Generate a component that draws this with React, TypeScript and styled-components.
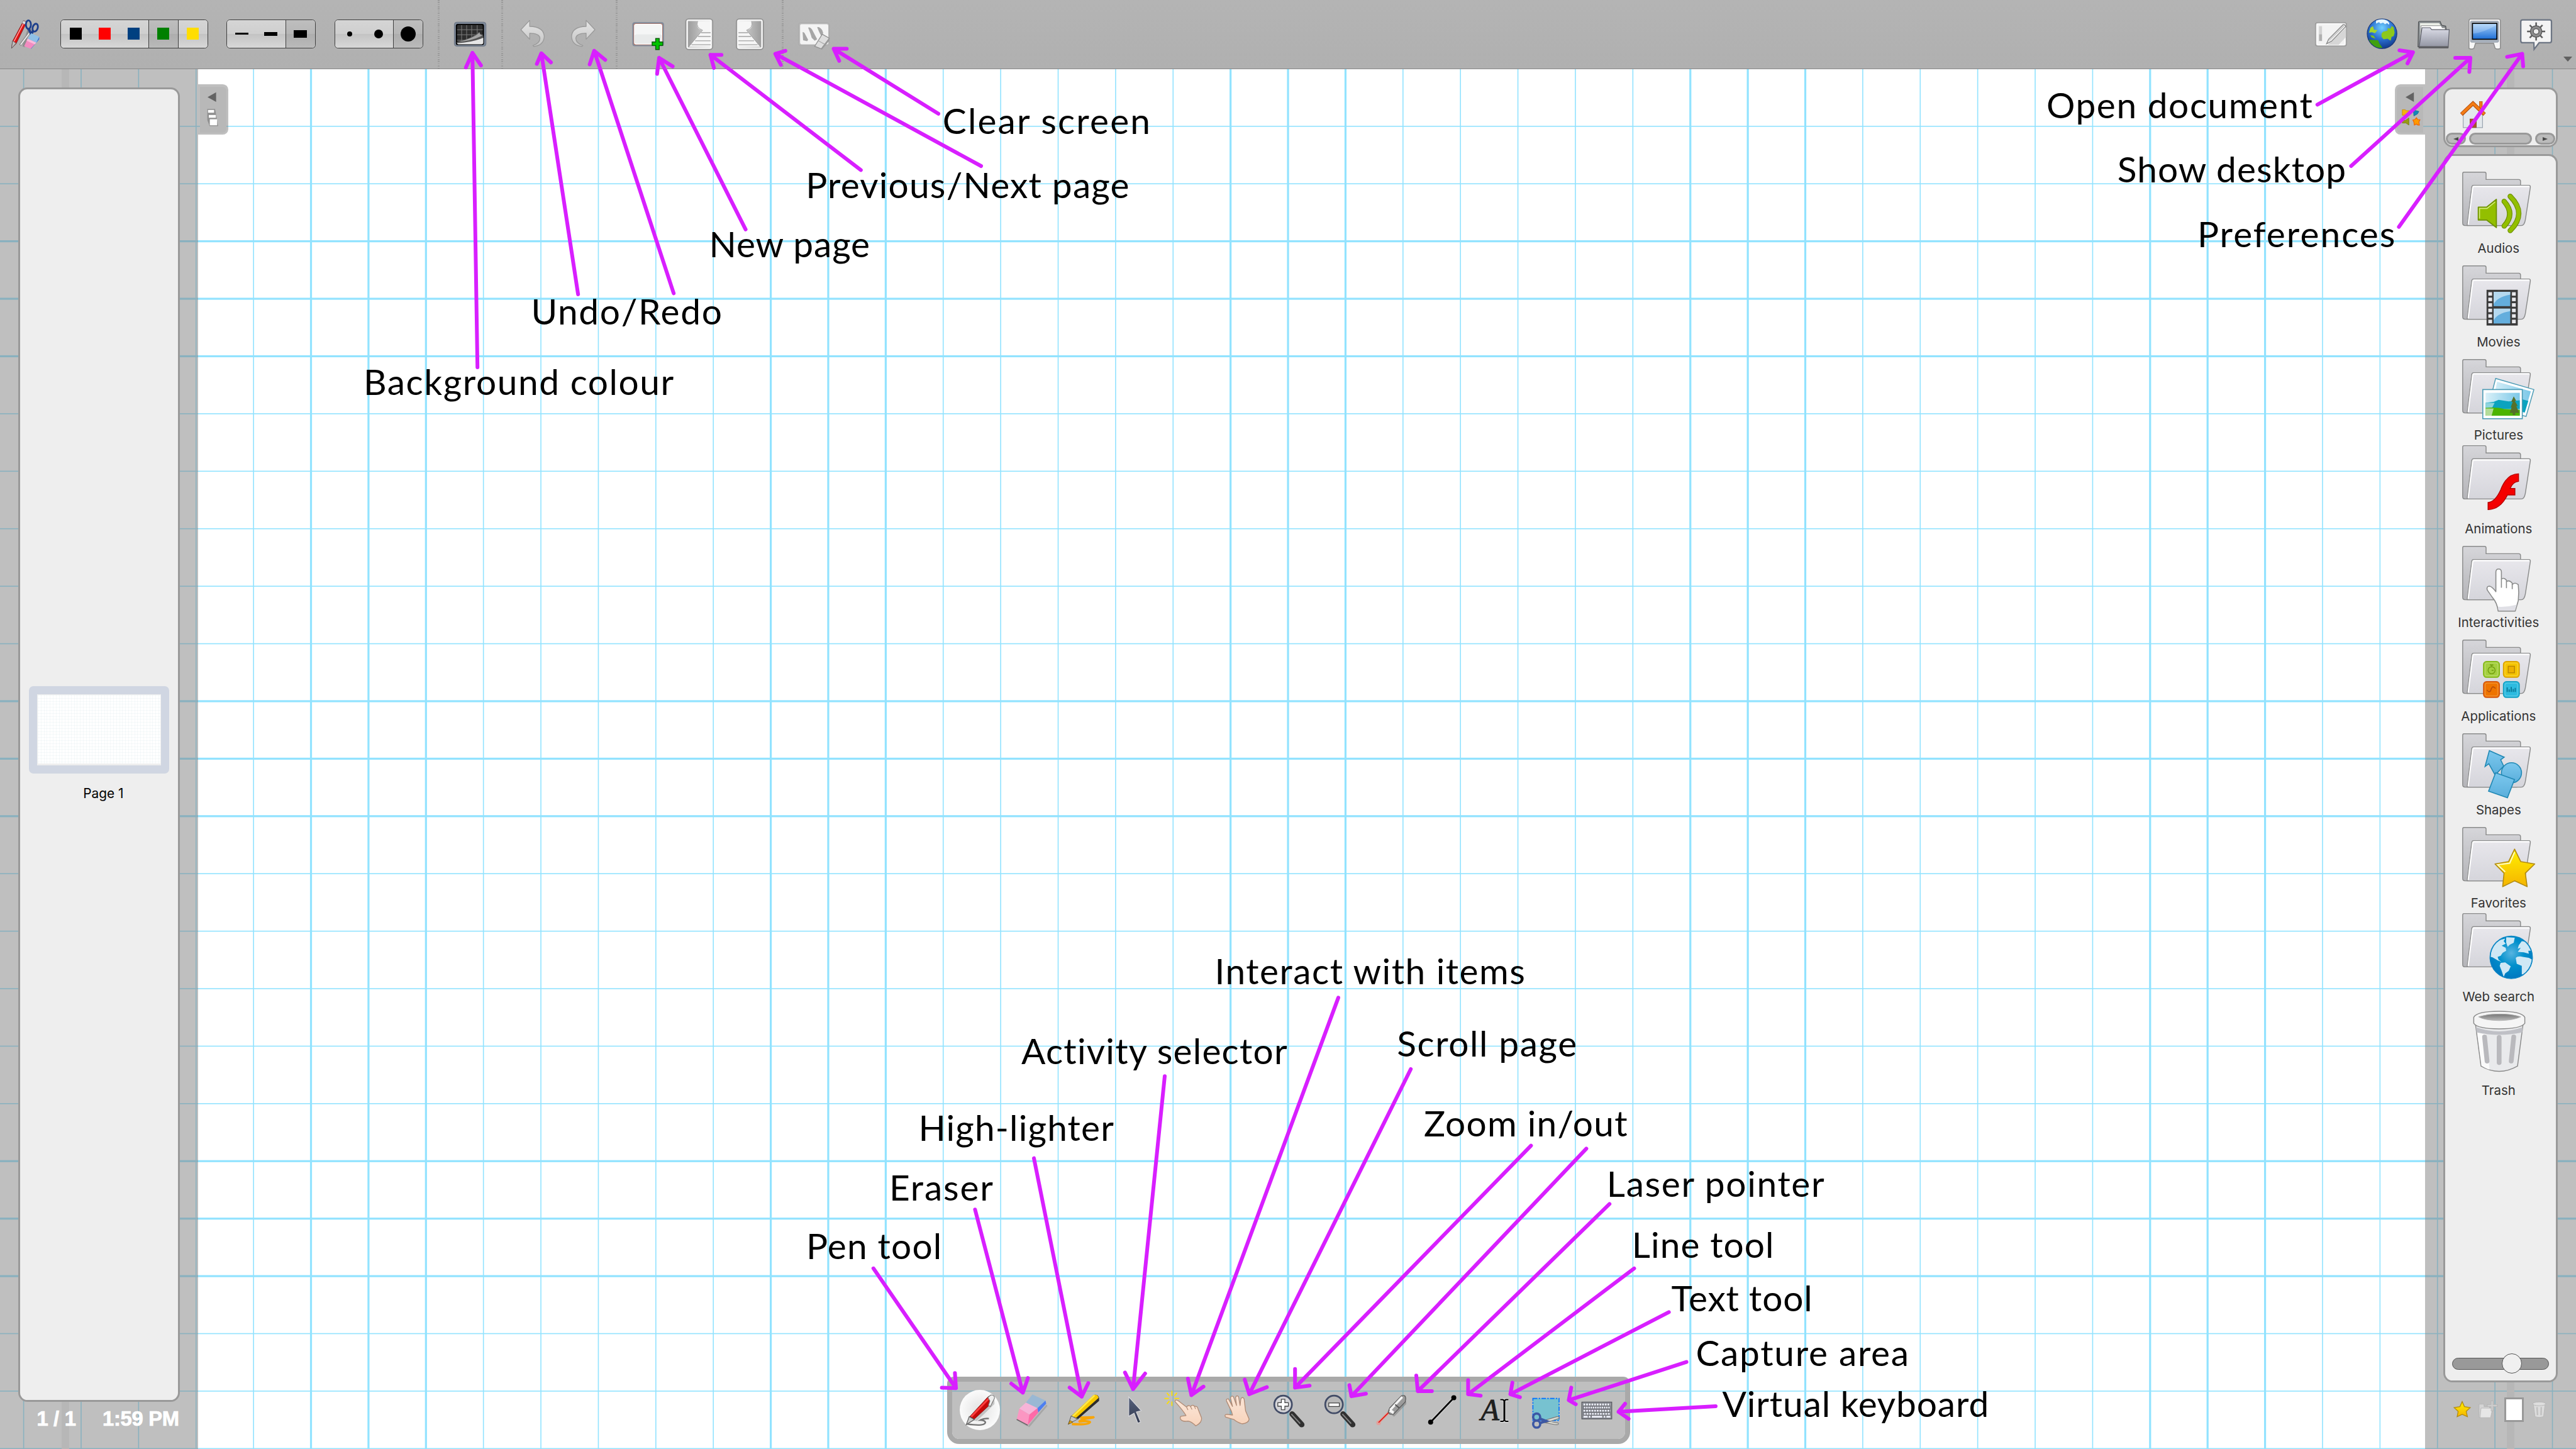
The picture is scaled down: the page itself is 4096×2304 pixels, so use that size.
import React, { useLayoutEffect, useRef, useState } from "react";
import styled, { createGlobalStyle } from "styled-components";

/* The board is designed on a 5120 x 2880 grid and shown at four fifths of it. */
const SCALE = 0.8;
const u = (n: number) => `${+(n * SCALE).toFixed(3)}px`;

const GlobalStyle = createGlobalStyle`
  html, body { margin: 0; padding: 0; background: #fff; }
  *, *::before, *::after { box-sizing: border-box; }
  svg { display: block; flex: none; overflow: visible; }
`;

const Screen = styled.div`
  position: relative;
  display: flex;
  flex-direction: column;
  width: ${u(5120)};
  height: ${u(2880)};
  overflow: hidden;
  background: #fff;
  font-family: Inter, "Liberation Sans", sans-serif;
`;

const Backdrop = styled.svg`
  position: absolute;
  inset: 0;
  width: 100%;
  height: 100%;
`;

const HiddenDefs = styled.svg`
  position: absolute;
  width: 0;
  height: 0;
`;

/* ---------- top toolbar ---------- */

const Toolbar = styled.header`
  position: relative;
  flex: none;
  display: flex;
  align-items: center;
  height: ${u(138)};
  padding: 0 ${u(8)} ${u(2)} ${u(20)};
  border-bottom: ${u(2.4)} solid #878787;
  background: linear-gradient(#b4b4b4, #b0b0b0);
`;

const IconSlot = styled.div<{ $gap: number; $w?: number; $h?: number }>`
  flex: none;
  margin-left: ${(p) => u(p.$gap)};
  width: ${(p) => u(p.$w ?? 64)};
  height: ${(p) => u(p.$h ?? 64)};
  & > svg { width: 100%; height: 100%; }
`;

const Segmented = styled.div<{ $gap: number; $w: number }>`
  flex: none;
  display: flex;
  margin-left: ${(p) => u(p.$gap)};
  width: ${(p) => u(p.$w)};
  height: ${u(58)};
  border: ${u(2.2)} solid #3f3f3f;
  border-radius: ${u(7)};
  overflow: hidden;
`;

const Segment = styled.div<{ $on?: boolean; $last?: boolean }>`
  flex: 1;
  display: flex;
  align-items: center;
  justify-content: center;
  background: ${(p) =>
    p.$on
      ? "linear-gradient(#bebebe 0%, #b6b6b6 49%, #adadad 50%, #bababa 100%)"
      : "linear-gradient(#d5d5d5 0%, #cfcfcf 49%, #c3c3c3 50%, #d8d8d8 100%)"};
  border-left: ${(p) => (p.$on ? `${u(2)} solid #3f3f3f` : "0")};
  border-right: ${(p) => (p.$on && !p.$last ? `${u(2)} solid #3f3f3f` : "0")};
`;

const Mark = styled.span<{ $w: number; $h: number; $c?: string; $round?: boolean }>`
  width: ${(p) => u(p.$w)};
  height: ${(p) => u(p.$h)};
  background: ${(p) => p.$c ?? "#000"};
  border-radius: ${(p) => (p.$round ? "50%" : "0")};
`;

const Separator = styled.div<{ $gap: number }>`
  flex: none;
  align-self: stretch;
  width: ${u(4)};
  margin: 0 0 ${u(-2)} ${(p) => u(p.$gap)};
  background: repeating-linear-gradient(#9c9c9c 0 ${u(2)}, #b3b3b3 ${u(2)} ${u(4.2)});
`;

const Spacer = styled.div`
  flex: 1;
`;

const MenuCaret = styled.div`
  align-self: flex-end;
  margin: 0 0 ${u(12)} ${u(22)};
  border: ${u(9)} solid transparent;
  border-top: ${u(10)} solid #606060;
  border-bottom: 0;
`;

/* ---------- side docks ---------- */

const Body = styled.main`
  position: relative;
  flex: 1;
  display: flex;
  justify-content: space-between;
`;

const Dock = styled.aside<{ $w: number; $band: number; $pad: string }>`
  position: relative;
  display: flex;
  flex-direction: column;
  width: ${(p) => u(p.$w)};
  padding: ${(p) => p.$pad};
  background: linear-gradient(
      90deg,
      transparent ${(p) => u(p.$band)},
      #b7b7b7 ${(p) => u(p.$band)} ${(p) => u(p.$band + 16)},
      transparent ${(p) => u(p.$band + 16)}
    ),
    rgba(127, 127, 127, 0.5);
`;

const Panel = styled.section<{ $h: number; $gap?: number }>`
  flex: none;
  display: flex;
  flex-direction: column;
  height: ${(p) => u(p.$h)};
  margin-top: ${(p) => u(p.$gap ?? 0)};
  border: ${u(4)} solid #999;
  border-radius: ${u(18)};
  background: #eee;
`;

const DockTab = styled.div<{ $side: "left" | "right" }>`
  position: absolute;
  top: ${u(30)};
  ${(p) => (p.$side === "left" ? "left: 100%" : "right: 100%")};
  width: ${u(60)};
  height: ${u(100)};
  padding: ${u(4)};
  background: rgba(127, 127, 127, 0.5);
  border-radius: ${(p) => (p.$side === "left" ? `0 ${u(11)} ${u(11)} 0` : `${u(11)} 0 0 ${u(11)}`)};
`;

const DockTabFace = styled.div<{ $side: "left" | "right" }>`
  height: 100%;
  background: #b8b8b8;
  border-radius: ${(p) => (p.$side === "left" ? `0 ${u(8)} ${u(8)} 0` : `${u(8)} 0 0 ${u(8)}`)};
  & > svg { width: 100%; height: 100%; }
`;

const PageThumb = styled.div`
  align-self: center;
  margin: ${u(1186)} 0 0 0;
  width: ${u(278)};
  height: ${u(174)};
  padding: ${u(16)};
  border-radius: ${u(9)};
  background: #d0d6e2;
`;

const PageSheet = styled.div`
  height: ${u(142)};
  border: ${u(2)} solid #eee;
  border-bottom-width: ${u(4)};
  background:
    repeating-linear-gradient(90deg, rgba(150, 190, 200, 0.09) 0 1px, transparent 1px ${u(6)}),
    repeating-linear-gradient(rgba(150, 190, 200, 0.09) 0 1px, transparent 1px ${u(6)}),
    #fff;
`;

const PageName = styled.div`
  padding-left: ${u(17)};
  margin-top: ${u(23)};
  text-align: center;
  font-size: ${u(26)};
  line-height: ${u(32)};
  color: #000;
`;

const StatusRow = styled.footer`
  display: flex;
  justify-content: space-between;
  padding: ${u(11)} ${u(2)} 0 ${u(37)};
  color: #fff;
  font: bold ${u(41)} / ${u(46)} "Liberation Sans", Arial, sans-serif;
  letter-spacing: ${u(-0.4)};
  -webkit-text-stroke: ${u(0.9)} #fff;
  white-space: nowrap;
`;

const HomeSlot = styled.div`
  width: ${u(60)};
  height: ${u(58)};
  margin: ${u(20)} 0 0 ${u(26)};
  & > svg { width: 100%; height: 100%; }
`;

const ScrollRow = styled.div`
  display: flex;
  justify-content: space-between;
  margin: ${u(8)} ${u(2)} 0;
`;

const ScrollPart = styled.div<{ $w: number }>`
  display: flex;
  align-items: center;
  justify-content: center;
  width: ${(p) => u(p.$w)};
  height: ${u(24)};
  border: ${u(4)} solid #999;
  border-radius: ${u(12)};
  background: #bbb;
`;

const Arrowhead = styled.span<{ $dir: "left" | "right" }>`
  border: ${u(4.5)} solid transparent;
  ${(p) =>
    p.$dir === "left"
      ? `border-right: ${u(11)} solid #484848; border-left: 0;`
      : `border-left: ${u(11)} solid #484848; border-right: 0;`}
`;

const Library = styled.div`
  display: flex;
  flex-direction: column;
  align-items: center;
  padding-top: ${u(26.5)};
`;

const LibraryItem = styled.div`
  display: flex;
  flex-direction: column;
  align-items: center;
  height: ${u(186)};
  padding-right: ${u(8)};
  & > svg { width: ${u(160)}; height: ${u(141)}; }
`;

const LibraryName = styled.div`
  font-size: ${u(25.5)};
  line-height: ${u(32)};
  color: #333;
  white-space: nowrap;
`;

const SizeSlider = styled.div`
  position: relative;
  margin: auto ${u(14)} ${u(22)};
  height: ${u(24)};
  border: ${u(2)} solid #555;
  border-radius: ${u(12)};
  background: #999;
`;

const SizeKnob = styled.div`
  position: absolute;
  left: ${u(98)};
  top: ${u(-10)};
  width: ${u(40)};
  height: ${u(40)};
  border: ${u(2)} solid #555;
  border-radius: 50%;
  background: #f0f0f0;
`;

const DockActions = styled.div`
  display: flex;
  align-items: center;
  padding: ${u(30)} 0 0 ${u(20)};
  height: ${u(78)};
`;

const EmptyColour = styled.div`
  width: ${u(38)};
  height: ${u(48)};
  margin-left: ${u(12)};
  border: ${u(4)} solid #999;
  background: #fff;
`;

/* ---------- stylus palette ---------- */

const StylusPalette = styled.nav`
  position: absolute;
  left: ${u(1882)};
  top: ${u(2736)};
  width: ${u(1358)};
  height: ${u(134)};
  display: flex;
  align-items: center;
  padding: 0 ${u(5)} ${u(1)};
  border: ${u(10)} solid #a9a9a9;
  border-radius: ${u(14)} ${u(14)} ${u(24)} ${u(24)};
  background: rgba(127, 127, 127, 0.5);
  background-clip: padding-box;
`;

const StylusButton = styled.div`
  flex: 1;
  display: flex;
  justify-content: center;
  & > svg { width: ${u(80)}; height: ${u(80)}; }
`;

/* ---------- annotations ---------- */

const Callout = styled.div<{ $x: number; $base: number }>`
  position: absolute;
  left: ${(p) => u(p.$x)};
  top: ${(p) => u(p.$base - 69)};
  font: 400 ${u(71)} / ${u(84)} Lato, "Open Sans", sans-serif;
  color: #000;
  white-space: nowrap;
`;

type Note = [text: string, x: number, right: number, base: number];

const notes: Note[] = [
  ["Clear screen", 1877, 2286, 266],
  ["Previous/Next page", 1608, 2243, 394],
  ["New page", 1416, 1727, 512],
  ["Undo/Redo", 1062, 1434, 645],
  ["Background colour", 729, 1338, 785],
  ["Open document", 4071, 4595, 235],
  ["Show desktop", 4212, 4661, 363],
  ["Preferences", 4374, 4760, 492],
  ["Interact with items", 2421, 3030, 1956],
  ["Activity selector", 2031, 2558, 2115],
  ["Scroll page", 2780, 3133, 2100],
  ["High-lighter", 1832, 2212, 2268],
  ["Zoom in/out", 2832, 3233, 2259],
  ["Eraser", 1774, 1973, 2386],
  ["Laser pointer", 3200, 3625, 2379],
  ["Pen tool", 1609, 1870, 2503],
  ["Line tool", 3250, 3524, 2500],
  ["Text tool", 3323, 3600, 2606],
  ["Capture area", 3374, 3793, 2715],
  ["Virtual keyboard", 3424, 3951, 2816],
];

const sideBearing = (c: string) =>
  "ATV".includes(c) ? 1 : "Z".includes(c) ? 2 : "COS".includes(c) ? 3.5 : 6.5;

/* Tracks the caption so that it spans exactly from x to right. */
function CalloutText({ note: [text, x, right, base] }: { note: Note }) {
  const ref = useRef<HTMLSpanElement>(null);
  const [tracking, setTracking] = useState(0);
  const lead = sideBearing(text[0]);
  useLayoutEffect(() => {
    const natural = ref.current!.getBoundingClientRect().width;
    const target = (right - x + lead + 3) * SCALE;
    setTracking((t) => t + (target - natural) / text.length);
  }, [text, x, right, lead]);
  return (
    <Callout $x={x - lead} $base={base}>
      <span ref={ref} style={{ letterSpacing: `${tracking}px` }}>
        {text}
      </span>
    </Callout>
  );
}

type P = [number, number];
const arrows: [tail: P, tip: P, a: P, b: P][] = [
  [[949, 730], [939, 105], [926, 134], [956, 130]],
  [[1149, 585], [1076, 106], [1067, 127], [1095, 124]],
  [[1339, 583], [1181, 101], [1172, 128], [1203, 119]],
  [[1482, 456], [1310, 115], [1306, 147], [1337, 132]],
  [[1711, 338], [1412, 109], [1434, 109], [1419, 135]],
  [[1950, 330], [1541, 107], [1561, 101], [1552, 129]],
  [[1865, 226], [1657, 97], [1683, 97], [1668, 121]],
  [[4606, 208], [4796, 104], [4769, 100], [4785, 126]],
  [[4673, 330], [4910, 115], [4880, 115], [4908, 143]],
  [[4768, 451], [5013, 107], [4983, 113], [5015, 132]],
  [[1736, 2521], [1900, 2759], [1898, 2729], [1872, 2758]],
  [[1938, 2404], [2033, 2768], [2010, 2750], [2043, 2739]],
  [[2055, 2302], [2150, 2776], [2126, 2758], [2163, 2749]],
  [[2315, 2139], [2252, 2761], [2236, 2728], [2276, 2730]],
  [[2660, 1983], [2368, 2773], [2361, 2740], [2392, 2756]],
  [[2804, 2125], [2483, 2771], [2474, 2742], [2518, 2757]],
  [[3043, 2277], [2574, 2758], [2574, 2721], [2603, 2754]],
  [[3153, 2283], [2686, 2775], [2682, 2753], [2715, 2770]],
  [[3199, 2393], [2818, 2765], [2815, 2734], [2846, 2765]],
  [[3248, 2521], [2918, 2771], [2918, 2743], [2943, 2774]],
  [[3317, 2608], [3002, 2771], [3006, 2748], [3021, 2777]],
  [[3352, 2707], [3118, 2783], [3123, 2758], [3132, 2791]],
  [[3410, 2795], [3217, 2806], [3230, 2790], [3237, 2820]],
];

/* ---------- drawings ---------- */

const columns = Array.from({ length: 45 }, (_, i) => ({ at: 47 + i * 114.23, w: i % 8 >= 5 ? 4 : 2 }));
const rows = Array.from({ length: 24 }, (_, j) => ({ at: 251 + j * 114.27, w: [2, 3, 4].includes(j % 8) ? 4 : 2 }));

const Grad = ({ id, a, b, h }: { id: string; a: string; b: string; h?: boolean }) => (
  <linearGradient id={id} x1="0" y1="0" x2={h ? 1 : 0} y2={h ? 0 : 1}>
    <stop offset="0" stopColor={a} />
    <stop offset="1" stopColor={b} />
  </linearGradient>
);

const Defs = () => (
  <HiddenDefs>
    <defs>
      <Grad id="folderBack" a="#d6d6da" b="#b4b4b8" />
      <Grad id="folderFront" a="#e8e7ec" b="#d5d5db" />
      <Grad id="sky" a="#d9f0f8" b="#7cc8e8" h />
      <Grad id="gold" a="#fff000" b="#f5b400" />
      <Grad id="blueShape" a="#7cc8ee" b="#5aaedb" />
      <Grad id="screen" a="#a9d2fa" b="#1d6ed6" />
      <Grad id="folderTop" a="#dcdde8" b="#8f929f" />
      <Grad id="ghost" a="#e6e6e6" b="#c4c4c4" />
      <Grad id="shade" a="#9c9c9c" b="#dadada" h />
      <Grad id="skin" a="#fbe6d8" b="#f8d4bc" />
      <Grad id="slate" a="#55607c" b="#333b50" />
      <Grad id="binDark" a="#757575" b="#b9b9b9" />
      <radialGradient id="earth" cx="0.5" cy="0.3" r="0.7">
        <stop offset="0" stopColor="#6fd0ff" />
        <stop offset="0.55" stopColor="#2a6fd0" />
        <stop offset="1" stopColor="#123a8c" />
      </radialGradient>
      <radialGradient id="web" cx="0.5" cy="0.4" r="0.6">
        <stop offset="0" stopColor="#57b4e0" />
        <stop offset="0.5" stopColor="#0090cc" />
        <stop offset="1" stopColor="#0078c0" />
      </radialGradient>
      <radialGradient id="disc" cx="0.5" cy="0.5" r="0.5">
        <stop offset="0" stopColor="#e2e2e2" />
        <stop offset="1" stopColor="#fbfbfb" />
      </radialGradient>
      <clipPath id="webClip"><circle cx="105" cy="79" r="41" /></clipPath>
      <clipPath id="earthClip"><circle cx="32" cy="32" r="29" /></clipPath>
    </defs>
  </HiddenDefs>
);

const StylesIcon = () => (
  <svg viewBox="0 0 64 64">
    <path d="M27 6 L33 9 L12 52 L3 61 L5 47Z" fill="#e01010" stroke="#6d2020" strokeWidth="1" />
    <path d="M29 7 L8 47" stroke="#ff9c9c" strokeWidth="2" />
    <path d="M5 46 L12 51 L3 61Z" fill="#bdbdbd" stroke="#555" />
    <path d="M26 6 L33 9 L31 14 L24 11Z" fill="#ddd" stroke="#777" strokeWidth=".8" />
    <path d="M43 24 L20 55 M37 24 L27 58" stroke="#8d8d8d" strokeWidth="5" />
    <path d="M42 26 L21 54" stroke="#f4f4f4" strokeWidth="2" />
    <ellipse cx="36.5" cy="14" rx="5" ry="8.5" fill="none" stroke="#1d3f8c" strokeWidth="3.500" />
    <ellipse cx="50" cy="20" rx="5" ry="8" fill="none" stroke="#1d3f8c" strokeWidth="3.500" transform="rotate(18 50 20)" />
    <path d="M37 22 L42 33 L46 26" stroke="#1d3f8c" strokeWidth="5" fill="none" />
    <path d="M42 31 L58 38 L52 51 L35 42Z" fill="#8fc0e6" />
    <path d="M58 38 L58 43 L42 62 L40 61 L52 50Z" fill="#3a6fd8" />
    <path d="M35 42 L52 50 L41 62 L28 57Z" fill="#f28cc0" />
    <path d="M35 42 L52 50 L49 53 L33 46Z" fill="#f9bcdc" />
  </svg>
);

const BackgroundIcon = () => (
  <svg viewBox="0 0 64 64">
    <rect x="0.5" y="9" width="63" height="48" rx="5" fill="#7d8898" stroke="#626c7c" />
    <rect x="3.5" y="12.5" width="56" height="42" rx="4" fill="#000" />
    <rect x="6" y="14.5" width="51" height="38" rx="3" fill="#2d2d2d" />
    <path d="M6 24H57 M6 34H57 M6 45H40 M15 15V50 M25 15V48 M35 15V44 M46 15V38" stroke="#7c7c7c" strokeWidth="1.3" />
    <path d="M5 49 Q34 42 50 28 Q51 33 58 36 L58 52 H6Z" fill="#555" />
    <path d="M7 48 Q38 42 51 29 Q50 35 57 35 Q38 46 7 48Z" fill="#a5a5a5" />
    <path d="M6 51 Q38 49 58 40 V50 Q58 53 55 53 H9 Q6 53 6 51Z" fill="#e6e6e6" />
  </svg>
);

const UndoIcon = ({ flip }: { flip?: boolean }) => (
  <svg viewBox="0 0 64 64">
    <path
      transform={flip ? "translate(64 0) scale(-1 1)" : undefined}
      d="M9 24 L26.500 5.500 V17.500 Q54 18 55.500 37 Q55 55 35 57.500 L33 55.500 Q47 51 47 41 Q46 31 26.500 31 V43Z"
      fill="url(#ghost)" stroke="#999" strokeWidth="1.600" strokeLinejoin="round"
    />
  </svg>
);

const NewPageIcon = () => (
  <svg viewBox="0 0 64 64">
    <rect x="0.500" y="9" width="63" height="48" rx="5" fill="#818b9b" />
    <rect x="3" y="11.500" width="58" height="43" rx="4" fill="#b4705f" />
    <rect x="4" y="12.500" width="56" height="41" rx="4" fill="#fff" />
    <rect x="5" y="14" width="54" height="19" rx="3" fill="#f5f6f6" />
    <rect x="5" y="33" width="54" height="19" rx="3" fill="#e8eaea" />
    <path d="M47 41.500h7v7h7v7h-7v8h-7v-8h-7v-7h7z" fill="#00c400" stroke="#075c07" strokeWidth="1.800" />
  </svg>
);

const PageTurnIcon = ({ flip }: { flip?: boolean }) => (
  <svg viewBox="0 0 64 64">
    <g transform={flip ? "translate(64 0) scale(-1 1)" : undefined}>
      <rect x="5.500" y="2.500" width="53.500" height="61" rx="6" fill="#e9e9e9" stroke="#8e8e8e" strokeWidth="2" />
      <rect x="9" y="6" width="46.500" height="54" fill="url(#shade)" stroke="#fff" strokeWidth="1.500" />
      <path d="M29 7 Q25 21 36 24.500 L39 25 L12 58 H55 V7Z" fill="#f6f6f6" />
      <path d="M29 7 Q25 20 39 25 L11 58" fill="none" stroke="#a0a0a0" strokeWidth="1.200" />
      <path d="M36 30H55 M30 37.500H55 M24 46H55 M17 54H55" stroke="#a2a2a2" strokeWidth="1.600" />
    </g>
  </svg>
);

const ClearIcon = () => (
  <svg viewBox="0 0 64 64">
    <rect x="1" y="10.500" width="61" height="45" rx="4" fill="#b9b9b9" stroke="#a6a6a6" />
    <rect x="4" y="13" width="56" height="40" rx="3" fill="#f4f4f4" />
    <path d="M9 29 Q11 28 13 31 L20 44 L18 47 L10 45Z M20 20 Q24 18 28 24 L38 43 L33 46 L27 40 Q25 32 20 20Z M38 19 Q43 18 48 25 L50 31 L46 36 Q42 30 38 19Z" fill="#a6a6a6" />
    <path d="M48 33 L62 41 L46 62 L33 57Z" fill="#dedede" stroke="#8f8f8f" strokeWidth="1.500" />
    <path d="M40 46 L53 53" stroke="#aaa" strokeWidth="1.500" />
    <path d="M46 62 L62 41 V46 L47 64Z" fill="#999" />
  </svg>
);

const BoardIcon = () => (
  <svg viewBox="0 0 64 64">
    <rect x="1" y="10" width="61.500" height="46.500" rx="4" fill="#e6e6e6" stroke="#9a9a9a" strokeWidth="2" />
    <rect x="4" y="12.500" width="55.500" height="41.500" rx="3" fill="#f3f3f3" stroke="#fff" strokeWidth="1.500" />
    <rect x="8" y="17" width="6" height="16" fill="#d2d2d2" />
    <rect x="8" y="33" width="6" height="13.500" fill="#b0b0b0" />
    <path d="M25 54 L62 20 V38 L47 54Z" fill="#c9c9c9" opacity=".7" />
    <path d="M23 52 L27 43 L56 14 Q60 13 61 18 L33 47Z" fill="#e8e8e8" stroke="#858585" strokeWidth="1.600" />
    <path d="M28 45 L58 16" stroke="#999" />
  </svg>
);

const EarthIcon = () => (
  <svg viewBox="0 0 64 64">
    <circle cx="32" cy="32" r="29.500" fill="url(#earth)" stroke="#1a3778" strokeWidth="1.500" />
    <g clipPath="url(#earthClip)">
      <path d="M20 6 Q30 1 40 5 Q48 9 46 14 L42 11 L38 13 L34 10 L29 12 L26 9 L20 12Z" fill="#e6f6ff" />
      <path d="M9 20 L14 17 L16 24 L23 25 L18 31 L12 29 L6 30Z" fill="#a5d62c" />
      <path d="M31 32 L34 28 L43 26 L43 21 L49 22 L51 17 L55 19 L57 30 L55 37 L51 38 L49 46 L43 42 L35 43 L31 38Z" fill="#8cc81c" />
      <path d="M9 35 L15 36 L19 42 L11 39Z" fill="#7ec01c" />
      <path d="M6 44 L24 45 L27 52 L33 60 L20 60 L9 50Z" fill="#3fa010" />
    </g>
  </svg>
);

const DocumentsIcon = () => (
  <svg viewBox="0 0 64 64">
    <path d="M2 9 Q2 7.500 4 7.500 H45 L48 15 L56 17 L57 24 V58 H1Z" fill="#8a8f92" stroke="#4d5052" strokeWidth="1.500" />
    <path d="M5 11 H43 L46 16 H8 L6 44Z" fill="#eef1ea" />
    <path d="M7 16 H47 L49 20 H55 V30 H7Z" fill="#fdfdfd" stroke="#777" />
    <path d="M9 20 H25 L28 24 H63 L61 60 H3Z" fill="url(#folderTop)" stroke="#5d5f6a" strokeWidth="1.500" />
    <path d="M3 57 H61.500 L61 61 H2Z" fill="#5c5d60" />
  </svg>
);

const DesktopIcon = () => (
  <svg viewBox="0 0 64 64">
    <path d="M4 3 H60 Q63.500 3 63.500 7 V61 Q58 64 53 61 L50 51 H14 L11 61 Q6 64 1 61 V7 Q1 3 4 3Z" fill="#f7f7f7" stroke="#8b8b8b" strokeWidth="1.800" />
    <rect x="4" y="7" width="56" height="42" rx="2.500" fill="#a9b2be" stroke="#8d97a5" />
    <rect x="8" y="11.500" width="48.500" height="31.500" fill="url(#screen)" stroke="#000" strokeWidth="2" />
    <path d="M9 32 Q30 30 55 15 V13 H9Z" fill="#fff" opacity=".22" />
  </svg>
);

const PreferencesIcon = () => (
  <svg viewBox="0 0 64 64">
    <path d="M5 4.500 H59 Q62.500 4.500 62.500 8 V46 Q62.500 50 59 50 H38 L28 63 L27.500 50 H5 Q1.500 50 1.500 46 V8 Q1.500 4.500 5 4.500Z" fill="#f4f4f4" stroke="#6c7583" strokeWidth="2.800" />
    <g stroke="#5f5f5f" strokeWidth="3.200">
      {[0, 45, 90, 135].map((a) => (
        <path key={a} d="M32 9.500 V45.500" transform={`rotate(${a} 32 27.500)`} />
      ))}
    </g>
    <circle cx="32" cy="27.500" r="11.500" fill="#8c8c8c" stroke="#555" strokeWidth="1.500" />
    <circle cx="32" cy="27.500" r="5.500" fill="#eee" stroke="#555" strokeWidth="1.500" />
  </svg>
);

const HomeIcon = () => (
  <svg viewBox="0 0 60 58">
    <path d="M9.500 27 L29 10 L48 27 V56 H9.500Z" fill="#e3e8ec" stroke="#9aa5ae" strokeWidth="1.500" />
    <rect x="23" y="39" width="12.500" height="17" fill="#a8552c" stroke="#8a3b18" />
    <rect x="42" y="4.500" width="5.500" height="16" fill="#ef7a1a" stroke="#b4500c" />
    <path d="M6 30 L29 8 L52 30" fill="none" stroke="#b34f10" strokeWidth="7.500" />
    <path d="M6.500 29 L29 8 L51.500 29" fill="none" stroke="#f47c14" strokeWidth="5" />
  </svg>
);

const PagesTabArt = () => (
  <svg viewBox="398 172 52 92">
    <path d="M430 183 V202 L413 192.500Z" fill="#636363" />
    <path d="M412.500 216H428L434 250H417L412.500 238Z" fill="#8f8f8f" />
    <g fill="#fff">
      <rect x="414" y="218" width="12" height="5.500" />
      <rect x="415.500" y="228" width="14" height="5.500" />
      <rect x="417.500" y="236.500" width="14.500" height="12" />
    </g>
  </svg>
);

const LibraryTabArt = () => (
  <svg viewBox="4764 172 52 92">
    <path d="M4798 183 V202 L4781.500 192.500Z" fill="#636363" />
    <path d="M4775 217.500h6l2 2h6v9h-14z" fill="#f2b40e" stroke="#c98a00" />
    <path d="M4797 218 L4808 221 L4805 226 L4798 230Z" fill="#1386b8" stroke="#0d6c96" />
    <path d="M4788 234 V248 L4782 244 H4775 V239 H4781Z" fill="#9a9a14" stroke="#74740a" />
    <path d="M4803 233.500 L4805.500 237 L4810 237.500 L4808 242 L4809 248 H4806 L4803 246 L4799 248 L4798 242 L4796 238 L4800 237Z" fill="#ff9a00" stroke="#f06400" strokeWidth="1.500" />
  </svg>
);

const Folder = ({ lift = 0 }: { lift?: number }) => (
  <g transform={`translate(0 ${-lift})`} stroke="#8a8b8b" strokeWidth="1.800">
    <path d="M11 6 H52 Q55 6 55 9 V20.500 H120 Q123.500 20.500 123.500 24 V40 L116 112 H13 Q8.500 112 8.500 107 V9 Q8.500 6 11 6Z" fill="url(#folderBack)" />
    <path d="M30 32 H140 Q143.500 32 143 36 L133 101 Q131 112 125 112 H17.500 L26.500 36 Q27 32 30 32Z" fill="url(#folderFront)" />
    <path d="M19.500 110 L28.500 37 Q29 34.500 31 34.500 H141" fill="none" stroke="#fff" strokeWidth="2.500" />
  </g>
);

const AudiosArt = () => (
  <>
    <Folder />
    <path d="M39.500 75.500 H56 L75.500 60 V116 L56 101 H39.500Z" fill="#93bf00" stroke="#6d9000" strokeWidth="2.200" strokeLinejoin="round" />
    <path d="M42 98 V78 H57 L73 65" fill="none" stroke="#d4ea80" strokeWidth="2" />
    {["M91 64 Q113 89 91 113", "M103 54 Q137 88 103 122"].map((d) => (
      <g key={d} fill="none" strokeLinecap="round">
        <path d={d} stroke="#6d9000" strokeWidth="10.500" />
        <path d={d} stroke="#93bf00" strokeWidth="7.500" />
      </g>
    ))}
  </>
);

const MoviesArt = () => (
  <>
    <Folder />
    <rect x="56" y="53.500" width="62" height="71" fill="#3b3b3b" />
    <rect x="70" y="57.500" width="33" height="28.500" fill="#64aedd" />
    <rect x="70" y="91" width="33" height="29.500" fill="#64aedd" />
    <path d="M70 57.500 H103 V63 Q78 67 70 82Z M70 91 H103 V96 Q78 100 70 114Z" fill="#b5d9ef" />
    {[58.200, 69.100, 80.100, 91, 102, 113].map((y) => (
      <React.Fragment key={y}>
        <rect x="59.500" y={y} width="7.500" height="7" fill="#e8e8ec" />
        <rect x="106.500" y={y} width="7.500" height="7" fill="#e8e8ec" />
      </React.Fragment>
    ))}
  </>
);

const PicturesArt = () => (
  <>
    <Folder />
    <path d="M74 43.500 L150 65.500 L134.500 119 L60 98Z" fill="#fff" stroke="#4a9ab4" strokeWidth="1.800" />
    <path d="M77 50 L144 69 L131.500 112 L68 92Z" fill="url(#sky)" />
    <path d="M124 84 L139 88 L132 111 L122 108Z" fill="#0ba3bf" />
    <rect x="48.500" y="65.500" width="78.500" height="58" fill="#fff" stroke="#4a9ab4" strokeWidth="2" />
    <rect x="54" y="72" width="68" height="45.500" fill="url(#sky)" />
    <path d="M54 92 L70 90 L80 86 L100 89 L122 87 V104 H54Z" fill="#0ba3bf" />
    <path d="M54 92 H72 L66 104 H54Z" fill="#8fd4de" />
    <path d="M54 102 Q76 100 90 104 L122 106 V117.500 H54Z" fill="#4cb400" />
    <path d="M54 103 H70 L66 117.500 H54Z" fill="#b4dc9a" />
    <path d="M110 79 L115 88 L112 88 L118 98 L115 98 L121 112 L113 112 V116 H108 V112 L102 112 L106 101 L104 101 L108 90 L105 90Z" fill="#55702a" />
  </>
);

const AnimationsArt = () => (
  <>
    <Folder lift={14} />
    <path d="M119.500 48 V63 Q108 64 103 77 H112.300 V90 H97.500 Q83 119 59 119 V105 Q73 104 84 80 Q96 48 119.500 48Z" fill="#f40000" stroke="#b50000" strokeWidth="1.800" />
  </>
);

const InteractivitiesArt = () => (
  <>
    <Folder />
    <path
      d="M74.500 96 V57 Q74.500 51 80 51 Q85.500 51 85.500 57 V71 Q90 67 95.500 73 V76 Q101 72 107 79 V82 Q112 76 119 82 Q121 98 119 114 L113 134.500 H79 Q77 118 68 108 L57.500 93 Q55 85 62 85 Q67 86 74.500 96Z"
      fill="#fff" stroke="#8a8b8b" strokeWidth="2" strokeLinejoin="round"
    />
    <path d="M85.500 71 V88 M95.500 76 V89 M107 81 V91" stroke="#8a8b8b" strokeWidth="2" />
    <path d="M79 126 Q98 127 116 122 L112.500 133.500 H80Z" fill="#e0e0e6" />
  </>
);

const appTiles = [
  { x: 50, y: 48.500, fill: "#a4cf3f", edge: "#7eb40d" },
  { x: 89.500, y: 48.500, fill: "#f5c400", edge: "#d79c00" },
  { x: 50, y: 88.500, fill: "#ee7400", edge: "#cf5210" },
  { x: 89.500, y: 88.500, fill: "#2cbbe0", edge: "#0f9cc0" },
];

const ApplicationsArt = () => (
  <>
    <Folder />
    {appTiles.map((t) => (
      <g key={t.fill}>
        <rect x={t.x} y={t.y} width="31.500" height="31.500" rx="6" fill={t.fill} stroke={t.edge} strokeWidth="2" />
        <rect x={t.x + 3} y={t.y + 3} width="25.500" height="25.500" rx="4" fill="none" stroke="#fff" opacity=".35" />
      </g>
    ))}
    <circle cx="66" cy="66" r="7" fill="none" stroke="#6f9c10" strokeWidth="1.800" />
    <path d="M66 58 V55 M62.500 55.500 H69.500 M66 66 H70" stroke="#6f9c10" strokeWidth="2" />
    <rect x="99" y="58" width="12.500" height="13" fill="#eeb000" stroke="#b98600" strokeWidth="1.800" />
    <path d="M57 105 Q60 111 64 107 Q67 96 71 100 L74 102" fill="none" stroke="#b44c0c" strokeWidth="2" />
    <path d="M97 109 V100 M101 109 V104 M105 109 V99 M109 109 V103 M113 109 V101" stroke="#0b7c9c" strokeWidth="2.500" />
  </>
);

const ShapesArt = () => (
  <>
    <Folder />
    <g stroke="#2088b4" strokeWidth="2" fill="url(#blueShape)">
      <path d="M61.500 39.500 L91 52.500 L84 57.500 L90 70 L73 88 L60.500 65.500 L53 71Z" />
      <circle cx="105.500" cy="83.500" r="20" />
      <path d="M74 83.500 L111.500 97 L97.500 133 L60 120Z" />
    </g>
  </>
);

const FavoritesArt = () => (
  <>
    <Folder />
    <path
      d="M111.700 49 L124 73.800 L151.700 78.400 L133 96.800 L136.700 123.600 L111.700 112 L88 123.600 L90.700 96.800 L72.700 78.400 L99.700 73.800Z"
      fill="url(#gold)" stroke="#b18a10" strokeWidth="2" strokeLinejoin="round"
    />
    <path d="M93 94 L78 80 L102 77 L111.700 55" fill="none" stroke="#fffbc0" strokeWidth="2.500" />
  </>
);

const WebArt = () => (
  <>
    <Folder lift={14} />
    <circle cx="105" cy="79" r="42.300" fill="url(#web)" stroke="#0a86c4" strokeWidth="1.500" />
    <g clipPath="url(#webClip)" fill="#cfe8f5">
      <path d="M64 78 Q64 54 84 44 L93 42 L90 47 L94 52 L86 56 L94 60 L95 66 L88 70 L84 76 L78 78 L80 84 L86 88 L78 85 L68 79Z" />
      <path d="M95 39 L112 40 L110 50 L102 54 L98 58 L95 50Z" />
      <path d="M84 90 L93 89 L104 97 L100 106 L93 111 L90 118 L86 106 L82 96Z" />
      <path d="M126 47 L120 55 L118 62 L124 60 L118 68 L130 69 L140 72 L139 66 L146 66 L142 56 L134 48Z" />
      <path d="M114 80 Q118 76 128 78 L140 80 L147 84 L143 100 L132 112 L126 113 L126 96 L116 92Z" />
    </g>
  </>
);

const TrashArt = () => (
  <>
    <path d="M34 26 L45 109 Q81 130 117.500 109 L128.500 26Z" fill="#e9eaec" stroke="#8a8a8a" strokeWidth="1.800" />
    <path d="M37 40 L46 108 Q55 114 62 116 L54 36Z" fill="#fbfbfb" />
    <path d="M35 32 Q81 48 127.500 32 L127 42 Q81 52 36 42Z" fill="#bfc0c6" />
    <path d="M30.500 12 Q36 0 81 0 Q126 0 132 12 V24 Q124 35 81 35 Q38 35 30.500 24Z" fill="#f5f5f5" stroke="#8a8a8a" strokeWidth="1.800" />
    <path d="M40 11 Q60 5 81 5.500 Q104 5 124 11 Q110 18 81 18.500 Q52 18 40 11Z" fill="url(#binDark)" stroke="#aaa" />
    <path d="M52 51 L57 99 M81 52 V102 M110 51 L105 99" stroke="#b9b9bd" strokeWidth="9.500" strokeLinecap="round" />
  </>
);

const library: [string, React.FC][] = [
  ["Audios", AudiosArt],
  ["Movies", MoviesArt],
  ["Pictures", PicturesArt],
  ["Animations", AnimationsArt],
  ["Interactivities", InteractivitiesArt],
  ["Applications", ApplicationsArt],
  ["Shapes", ShapesArt],
  ["Favorites", FavoritesArt],
  ["Web search", WebArt],
  ["Trash", TrashArt],
];

const PenArt = () => (
  <>
    <circle cx="40" cy="40" r="40" fill="url(#disc)" />
    <path d="M15 68 Q52 73 51 64 Q49 60 41 60 Q48 56 58 57" fill="none" stroke="#757575" strokeWidth="3" />
    <path d="M26 60 L60 30 L69 20 V28 L34 62Z" fill="#999" opacity=".5" />
    <path d="M20 53 L56 14 Q63 9 68 15 L65 25 L29 58Z" fill="#c60a0a" stroke="#7a0c0c" />
    <path d="M23 53 L58 17" stroke="#ff4040" strokeWidth="3.500" />
    <path d="M56 15 L62 10 Q70 10 69 17 L61 33 L57 31 L60 22Z" fill="#eee" stroke="#777" strokeWidth="1.400" />
    <path d="M19 53 L29 59 L13 69Z" fill="#cacaca" stroke="#5e5e5e" strokeWidth="1.500" />
  </>
);

const EraserArt = () => (
  <>
    <path d="M33 72 L70 29 L72 32 L36 74 L12 63Z" fill="#8d8d8d" opacity=".5" />
    <path d="M42 9 L68 21.300 L52 36.300 L29 25.300Z" fill="#9ab8d4" />
    <path d="M68 21.300 L69.500 27.300 L53.400 45.300 L52 36.300Z" fill="#4d7ff0" />
    <path d="M29 25.300 L52 36.300 L36 49 L16 37.300Z" fill="#f6b4d8" />
    <path d="M16 37.300 L36 49 L32.700 70.300 L10.700 58.700Z" fill="#fb96c2" />
    <path d="M52 36.300 L53.400 45.300 L32.700 70.300 L36 49Z" fill="#ff6aa8" />
    <path d="M10.700 58.700 L32.700 70.300" stroke="#666" strokeWidth="2" />
  </>
);

const HighlighterArt = () => (
  <>
    <path d="M18 68 Q52 70 54 64 Q50 61 33 63 Q36 58 61 54.500 L34 55" fill="none" stroke="#f9a400" strokeWidth="4.500" strokeLinejoin="round" />
    <path d="M17 52 L62 10 Q70 8 72 16 V22 L30 58Z" fill="#2c2c2c" />
    <path d="M17 52 L61 10 Q70 8 71 16 L26 56Z" fill="#f8c800" />
    <path d="M19 53 L63 11" stroke="#ffe848" strokeWidth="3.500" />
    <path d="M16.500 52 L29.500 58 L11 68Z" fill="#c4c4c4" stroke="#666" strokeWidth="1.400" />
    <path d="M11 68 L14 61 L20 64Z" fill="#f0a800" stroke="#6d5210" />
  </>
);

const SelectorArt = () => (
  <path
    d="M28.500 14 L53.300 41.300 L43.600 44 L52 64 L46.400 66 L39 46.500 L28.500 52.500Z"
    fill="url(#slate)" stroke="#d8d8dc" strokeWidth="1.500"
  />
);

const InteractArt = () => (
  <>
    <path d="M13 2V12 M13 23V32 M-2 17H7 M18 17H27.500 M3 6L8 12 M23 6L18 12 M3 28L8 22" stroke="#ffe000" strokeWidth="2.200" />
    <path
      d="M19 23 Q20 18 26 22 L42 34 Q46 29 50 33 Q55 28 58 33 Q63 31 65 38 L72 56 Q73 65 60.500 71.500 Q52 63 45 62 Q34 64 30 58 Q28 52 34 52 L41 51 Q36 42 19 23Z"
      fill="url(#skin)" stroke="#b08a74" strokeWidth="1.600" strokeLinejoin="round"
    />
    <path d="M42 34 L45 40 M50 33 L53 39 M58 33 L60 38" stroke="#b08a74" strokeWidth="1.500" />
  </>
);

const ScrollArt = () => (
  <path
    d="M29 43 L19 22 Q18 17 23 18 L31 33 L27 16 Q29 10 33 14 L39 31 L37 15 Q40 9 43 14 L46 31 L47.500 18 Q51 12 54 18 L57 42 L64 58 Q63 66 50 67.500 Q40 64 34 59 Q26 57 17 54 Q14 49 20 48.500 L31 50Z"
    fill="url(#skin)" stroke="#b08a74" strokeWidth="1.600" strokeLinejoin="round"
  />
);

const ZoomArt = ({ out }: { out?: boolean }) => (
  <>
    <path d="M47 48 L66 69" stroke="#303030" strokeWidth="11" strokeLinecap="round" />
    <path d="M45.500 48 L63 67" stroke="#858585" strokeWidth="2.500" />
    <circle cx="29" cy="29" r="17.500" fill={out ? "#b9b9b9" : "#d4d4d8"} stroke="#414b66" strokeWidth="3.400" />
    {out ? (
      <rect x="18.500" y="26" width="21" height="7" fill="#fff" stroke="#444" strokeWidth="1.600" />
    ) : (
      <path d="M25.500 18.500h7v7h7v7h-7v7h-7v-7h-7v-7h7z" fill="#fff" stroke="#444" strokeWidth="1.600" />
    )}
  </>
);

const LaserArt = () => (
  <>
    <circle cx="15" cy="65.500" r="4.500" fill="#e89a94" opacity=".8" />
    <path d="M15 65 L36 44" stroke="#f0907f" strokeWidth="5" opacity=".7" />
    <path d="M15 65 L36 44" stroke="#df1010" strokeWidth="2" />
    <path d="M42 51 L70 22 V28 L46 53Z" fill="#777" opacity=".5" />
    <path d="M34 44 L37 36 L60 12 Q69 8 69 18 L68 24 L44 49 L37 48Z" fill="#9b9b9b" stroke="#555" strokeWidth="1.400" />
    <path d="M38 40 L62 14" stroke="#f4f4f4" strokeWidth="4.500" />
    <path d="M48 29 L56 36" stroke="#555" strokeWidth="2.500" />
    <path d="M36 43 L44 48 L46 43 L39 38Z" fill="#f3f3f3" />
  </>
);

const LineArt = () => (
  <>
    <path d="M16 64 L62 16" stroke="#fff" strokeWidth="6" opacity=".45" />
    <path d="M16 64 L62 16" stroke="#000" strokeWidth="3.400" />
    <circle cx="16" cy="64" r="5" />
    <circle cx="62" cy="15.500" r="5" />
  </>
);

const GlyphA = styled.text`
  font: italic 400 60px "Liberation Serif", "Times New Roman", serif;
  fill: #1f1f1f;
  stroke: #1f1f1f;
  stroke-width: 1.2px;
`;

const TextArt = () => (
  <>
    <GlyphA x="13" y="60.500">A</GlyphA>
    <path d="M52 19.500 H57 L60 21.500 L63 19.500 H68 M52 62.500 H57 L60 60.500 L63 62.500 H68 M60 21V61" fill="none" stroke="#eee" strokeWidth="6" opacity=".6" />
    <path d="M52 19.500 H57 L60 21.500 L63 19.500 H68 M52 62.500 H57 L60 60.500 L63 62.500 H68" fill="none" stroke="#000" strokeWidth="2.500" />
    <path d="M60 21V61" stroke="#000" strokeWidth="3.600" />
  </>
);

const CaptureArt = () => (
  <>
    <rect x="15.500" y="17" width="52" height="44" fill="#77c2d0" stroke="#0070ff" strokeWidth="2" strokeDasharray="9 2.500 3 2.500" />
    <path d="M34 62 L64 53 Q70 54 67 57 L42 65Z M34 60 L66 66 Q68 70 60 69 L38 65Z" fill="#dcdcd4" stroke="#777" strokeWidth="1.300" />
    <path d="M29 57 L42 62 L29 66" fill="none" stroke="#3c57a4" strokeWidth="5" />
    <circle cx="23" cy="54" r="7" fill="none" stroke="#3c57a4" strokeWidth="4.500" />
    <circle cx="23" cy="68" r="7" fill="none" stroke="#3c57a4" strokeWidth="4.500" />
  </>
);

const KeyboardArt = () => (
  <>
    <rect x="10.500" y="24.500" width="59" height="33" fill="#74767d" stroke="#5b5d63" strokeWidth="2" />
    <rect x="12" y="26" width="56" height="30" fill="none" stroke="#a4a6ad" strokeWidth="1" />
    {[29, 35.200, 41.400, 47.600].map((y, i) => (
      <path key={y} d={`M${13.5 + (i % 2)} ${y} H67`} stroke="#eef0fa" strokeWidth="3.600" strokeDasharray={i === 1 ? "2.800 1.600" : "3.600 1.700"} />
    ))}
    <path d="M13.500 53.300H22 M24 53.300H27.500 M30 53.300H51 M53.500 53.300H57 M59 53.300H67" stroke="#eef0fa" strokeWidth="3.200" />
  </>
);

const stylusTools: [string, React.ReactNode][] = [
  ["pen", <PenArt />],
  ["eraser", <EraserArt />],
  ["highlighter", <HighlighterArt />],
  ["selector", <SelectorArt />],
  ["interact", <InteractArt />],
  ["scroll", <ScrollArt />],
  ["zoom-in", <ZoomArt />],
  ["zoom-out", <ZoomArt out />],
  ["laser", <LaserArt />],
  ["line", <LineArt />],
  ["text", <TextArt />],
  ["capture", <CaptureArt />],
  ["keyboard", <KeyboardArt />],
];

export default function App() {
  return (
    <Screen>
      <GlobalStyle />
      <Defs />
      <Backdrop viewBox="0 0 5120 2880">
        <g fill="#92e3ff">
          {columns.map((c) => (
            <rect key={c.at} x={c.at - c.w / 2} y="0" width={c.w} height="2880" />
          ))}
          {rows.map((r) => (
            <rect key={r.at} x="0" y={r.at - r.w / 2} width="5120" height={r.w} />
          ))}
        </g>
      </Backdrop>

      <Toolbar>
        <IconSlot $gap={0}><StylesIcon /></IconSlot>
        <Segmented $gap={36.5} $w={293}>
          <Segment><Mark $w={24} $h={24} /></Segment>
          <Segment><Mark $w={24} $h={24} $c="#f00" /></Segment>
          <Segment><Mark $w={24} $h={24} $c="#004080" /></Segment>
          <Segment $on><Mark $w={24} $h={24} $c="#008000" /></Segment>
          <Segment><Mark $w={24} $h={24} $c="#ffdd00" /></Segment>
        </Segmented>
        <Segmented $gap={37} $w={177}>
          <Segment><Mark $w={26} $h={4} /></Segment>
          <Segment><Mark $w={26} $h={8} /></Segment>
          <Segment $on $last><Mark $w={26} $h={16} /></Segment>
        </Segmented>
        <Segmented $gap={37} $w={177}>
          <Segment><Mark $w={10} $h={10} $round /></Segment>
          <Segment><Mark $w={18} $h={18} $round /></Segment>
          <Segment $on $last><Mark $w={30} $h={30} $round /></Segment>
        </Segmented>
        <Separator $gap={28.5} />
        <IconSlot $gap={28}><BackgroundIcon /></IconSlot>
        <Separator $gap={30} />
        <IconSlot $gap={26}><UndoIcon /></IconSlot>
        <IconSlot $gap={38}><UndoIcon flip /></IconSlot>
        <Separator $gap={32} />
        <IconSlot $gap={28}><NewPageIcon /></IconSlot>
        <IconSlot $gap={38}><PageTurnIcon /></IconSlot>
        <IconSlot $gap={37}><PageTurnIcon flip /></IconSlot>
        <Separator $gap={31} />
        <IconSlot $gap={28}><ClearIcon /></IconSlot>
        <Spacer />
        <IconSlot $gap={0}><BoardIcon /></IconSlot>
        <IconSlot $gap={38}><EarthIcon /></IconSlot>
        <IconSlot $gap={38}><DocumentsIcon /></IconSlot>
        <IconSlot $gap={38}><DesktopIcon /></IconSlot>
        <IconSlot $gap={38}><PreferencesIcon /></IconSlot>
        <MenuCaret />
      </Toolbar>

      <Body>
        <Dock $w={394} $band={122} $pad={`${u(36)} ${u(36)} 0`}>
          <Panel $h={2612}>
            <PageThumb><PageSheet /></PageThumb>
            <PageName>Page 1</PageName>
          </Panel>
          <StatusRow>
            <span>1 / 1</span>
            <span>1:59 PM</span>
          </StatusRow>
          <DockTab $side="left"><DockTabFace $side="left"><PagesTabArt /></DockTabFace></DockTab>
        </Dock>

        <Dock $w={300} $band={162} $pad={`${u(36)} ${u(36)} 0`}>
          <Panel $h={119}>
            <HomeSlot><HomeIcon /></HomeSlot>
            <ScrollRow>
              <ScrollPart $w={40}><Arrowhead $dir="left" /></ScrollPart>
              <ScrollPart $w={124} />
              <ScrollPart $w={40}><Arrowhead $dir="right" /></ScrollPart>
            </ScrollRow>
          </Panel>
          <Panel $h={2442} $gap={13}>
            <Library>
              {library.map(([name, Art]) => (
                <LibraryItem key={name}>
                  <svg viewBox="0 0 160 141"><Art /></svg>
                  <LibraryName>{name}</LibraryName>
                </LibraryItem>
              ))}
            </Library>
            <SizeSlider><SizeKnob /></SizeSlider>
          </Panel>
          <DockActions>
            <IconSlot $gap={0} $w={36} $h={36}>
              <svg viewBox="0 0 36 36">
                <path d="M17.500 2 L22 12 L33.500 14 L25.500 21.500 L28 32 L17.500 27.500 L7.500 32 L9.500 21.500 L1.500 14 L13 12Z" fill="url(#gold)" stroke="#b18a10" strokeWidth="1.600" />
              </svg>
            </IconSlot>
            <IconSlot $gap={14} $w={40} $h={36}>
              <svg viewBox="0 0 40 36">
                <path d="M1 7H11V12H22V34H1Z" fill="#d4d4d4" stroke="#b0b0b0" />
                <path d="M5 15H28L24 34H3Z" fill="#e6e6e6" stroke="#b2b2b2" />
                <path d="M27 0V21 M17 10H38" stroke="#b0b0b0" strokeWidth="5" />
                <path d="M27 1V20 M18 10H37" stroke="#cdcdcd" strokeWidth="3" />
              </svg>
            </IconSlot>
            <EmptyColour />
            <IconSlot $gap={16} $w={30} $h={36}>
              <svg viewBox="0 0 30 36">
                <path d="M3 7L6 32Q14 35 23 32L26 7Z" fill="#dcdcdc" stroke="#b4b4b4" />
                <ellipse cx="14.500" cy="6.500" rx="13" ry="3.800" fill="#dedede" stroke="#aeaeae" />
                <path d="M10 13L11 29 M18.500 13L18 29" stroke="#c0c0c0" strokeWidth="3" />
              </svg>
            </IconSlot>
          </DockActions>
          <DockTab $side="right"><DockTabFace $side="right"><LibraryTabArt /></DockTabFace></DockTab>
        </Dock>
      </Body>

      <StylusPalette>
        {stylusTools.map(([name, art]) => (
          <StylusButton key={name}>
            <svg viewBox="0 0 80 80">{art}</svg>
          </StylusButton>
        ))}
      </StylusPalette>

      <Backdrop viewBox="0 0 5120 2880">
        <g fill="none" stroke="#d81fff" strokeWidth="7.500" strokeLinecap="round" strokeLinejoin="round">
          {arrows.map(([tail, tip, a, b]) => (
            <path key={tail.join()} d={`M${tail}L${tip}M${a}L${tip}L${b}`} />
          ))}
        </g>
      </Backdrop>
      {notes.map((n) => (
        <CalloutText key={n[0]} note={n} />
      ))}
    </Screen>
  );
}
